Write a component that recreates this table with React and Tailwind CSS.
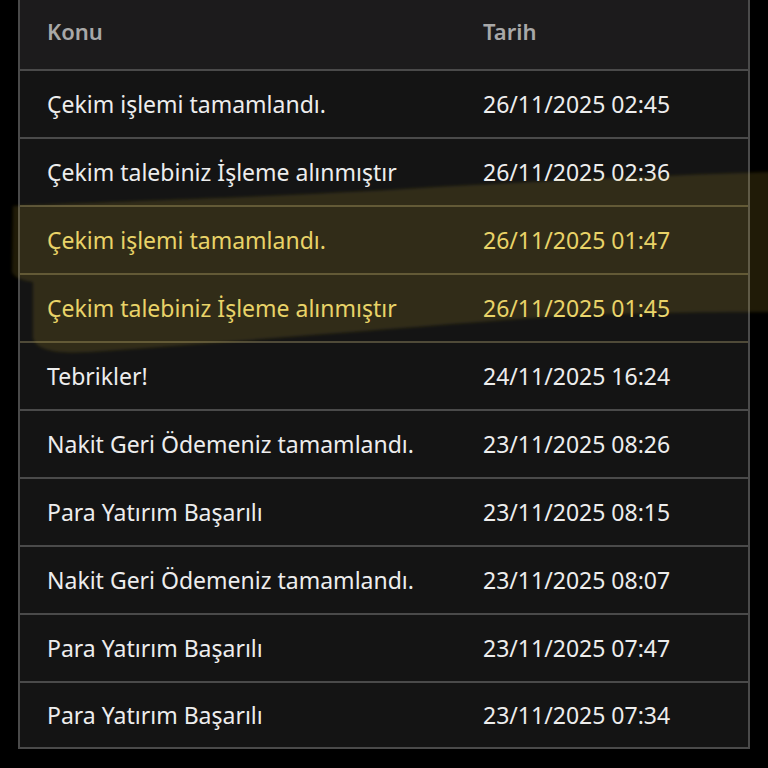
const ROWS = [
  { subject: "Çekim işlemi tamamlandı.", date: "26/11/2025 02:45" },
  { subject: "Çekim talebiniz İşleme alınmıştır", date: "26/11/2025 02:36" },
  { subject: "Çekim işlemi tamamlandı.", date: "26/11/2025 01:47", marked: true },
  { subject: "Çekim talebiniz İşleme alınmıştır", date: "26/11/2025 01:45", marked: true },
  { subject: "Tebrikler!", date: "24/11/2025 16:24" },
  { subject: "Nakit Geri Ödemeniz tamamlandı.", date: "23/11/2025 08:26" },
  { subject: "Para Yatırım Başarılı", date: "23/11/2025 08:15" },
  { subject: "Nakit Geri Ödemeniz tamamlandı.", date: "23/11/2025 08:07" },
  { subject: "Para Yatırım Başarılı", date: "23/11/2025 07:47" },
  { subject: "Para Yatırım Başarılı", date: "23/11/2025 07:34" },
];

// marker stroke drawn over the two highlighted rows
function Highlight() {
  return (
    <svg className="absolute inset-0 pointer-events-none" width="768" height="768" viewBox="0 0 768 768">
      <defs>
        <filter id="soft" x="-5%" y="-20%" width="110%" height="140%">
          <feGaussianBlur stdDeviation="1.6" />
        </filter>
      </defs>
      <path
        d="M13 206 C 120 201, 300 196, 420 188 C 560 180, 680 175, 770 172 L 770 312 C 700 312, 620 313, 560 316 C 420 326, 260 340, 90 352 C 55 354, 36 350, 33 338 L 33 282 C 22 280, 14 278, 12 272 Z"
        fill="rgba(214,178,42,0.15)"
        filter="url(#soft)"
      />
    </svg>
  );
}

export default function App() {
  return (
    <div className="relative w-[768px] h-[768px] bg-black overflow-hidden" style={{ fontFamily: '"Noto Sans", "Open Sans", sans-serif' }}>
      <div className="mx-[18px] border-x-2 border-b-2 border-[#4a4a4a] bg-[#141414]">
        <div className="flex h-[71px] items-center pb-[6px] bg-[#1c1b1c] border-b-2 border-[#4a4a4a] text-[22px] font-semibold text-[#a8a8a8]">
          <div className="w-[463px] pl-[27px]">Konu</div>
          <div>Tarih</div>
        </div>
        {ROWS.map((row, i) => {
          const last = i === ROWS.length - 1;
          return (
            <div
              key={i}
              className={`flex items-center text-[23px] ${last ? "h-[64px]" : "h-[68px] border-b-2"} ${row.marked || ROWS[i + 1]?.marked ? "border-[#4f4a38]" : "border-[#4a4a4a]"} ${row.marked ? "text-[#ecd872]" : "text-[#ededed]"}`}
            >
              <div className="w-[463px] pl-[27px]">{row.subject}</div>
              <div>{row.date}</div>
            </div>
          );
        })}
      </div>
      <Highlight />
    </div>
  );
}
